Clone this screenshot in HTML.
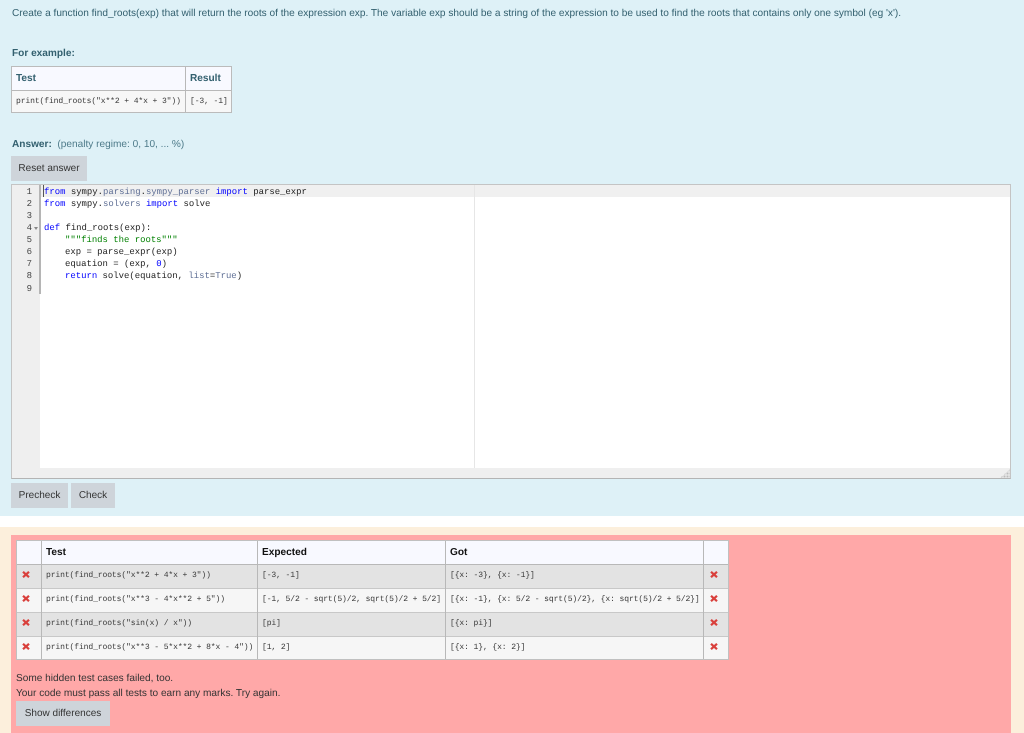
<!DOCTYPE html>
<html><head><meta charset="utf-8"><style>
html,body{margin:0;padding:0}
body{width:1024px;height:733px;position:relative;overflow:hidden;background:#fff;font-family:"Liberation Sans",sans-serif;font-size:10.1px;color:#2f2f2f;text-rendering:geometricPrecision;filter:blur(.3px)}
div{position:absolute;box-sizing:border-box}
.t{white-space:pre;line-height:14px}
.m{font-family:"Liberation Mono",monospace;white-space:pre;line-height:12px}
.b{font-weight:bold}
.btn{background:#ced4da;color:#333;text-align:center;line-height:26px;height:25px;font-size:10px}
.k{color:#00f}.g{color:#008000}.c{color:#5f6f95}
.ln{left:12px;width:20px;text-align:right;color:#444;font-family:"Liberation Mono",monospace;font-size:9px;line-height:12px}
svg.x{position:absolute;width:8px;height:7px}
.line{background:#b8b8b8}
.tm{font-size:8.06px;letter-spacing:-.12px;color:#3a3a3a;line-height:12px}
</style></head><body>
<div style="left:0;top:0;width:1024px;height:516px;background:#def1f7"></div>
<div style="left:0;top:527px;width:1024px;height:206px;background:#fcefdc"></div>
<div style="left:11px;top:535px;width:1000px;height:198px;background:#ffa8a8"></div>

<div class="t" style="left:12px;top:7px;color:#33606f">Create a function find_roots(exp) that will return the roots of the expression exp. The variable exp should be a string of the expression to be used to find the roots that contains only one symbol (eg 'x').</div>
<div class="t b" style="left:12px;top:47px;color:#33606f">For example:</div>

<div style="left:11px;top:66px;width:221px;height:47px;border:1px solid #bbb;background:#f7f7f7"></div>
<div style="left:12px;top:67px;width:219px;height:23px;background:#f8f9ff"></div>
<div class="line" style="left:12px;top:90px;width:219px;height:1px"></div>
<div class="line" style="left:185px;top:67px;width:1px;height:45px"></div>
<div class="t b" style="left:16px;top:72px;color:#33606f">Test</div>
<div class="t b" style="left:190px;top:72px;color:#33606f">Result</div>
<div class="m tm" style="left:16px;top:96px">print(find_roots("x**2 + 4*x + 3"))</div>
<div class="m tm" style="left:190px;top:96px">[-3, -1]</div>

<div class="t" style="left:12px;top:138px;color:#4d7a89"><span class="b" style="color:#33606f">Answer:</span>  (penalty regime: 0, 10, ... %)</div>
<div class="btn" style="left:11px;top:156px;width:76px">Reset answer</div>

<div style="left:11px;top:184px;width:1000px;height:295px;background:#fff;border:1px solid #c4c4c4;border-bottom-color:#b4b4b4"></div>
<div style="left:12px;top:185px;width:28px;height:293px;background:#efefef"></div>
<div style="left:12px;top:468px;width:998px;height:10px;background:#efefef"></div>
<div style="left:40px;top:185px;width:970px;height:12px;background:#f0f0f0"></div>
<div style="left:474px;top:185px;width:1px;height:283px;background:#e6e6e6"></div>
<div style="left:39px;top:185px;width:2px;height:109px;background:#b5b5b5"></div>
<div style="left:43px;top:185px;width:1px;height:12px;background:#555"></div>

<div class="ln" style="top:186px">1</div>
<div class="ln" style="top:198px">2</div>
<div class="ln" style="top:210px">3</div>
<div class="ln" style="top:222px">4</div>
<div class="ln" style="top:234px">5</div>
<div class="ln" style="top:246px">6</div>
<div class="ln" style="top:258px">7</div>
<div class="ln" style="top:270px">8</div>
<div class="ln" style="top:283px">9</div>
<div style="left:34px;top:227px;width:0;height:0;border-left:2px solid transparent;border-right:2px solid transparent;border-top:3px solid #888"></div>

<div class="m" style="left:44px;top:186px;font-size:8.95px;color:#222"><span class="k">from</span> sympy.<span class="c">parsing</span>.<span class="c">sympy_parser</span> <span class="k">import</span> parse_expr</div>
<div class="m" style="left:44px;top:198px;font-size:8.95px;color:#222"><span class="k">from</span> sympy.<span class="c">solvers</span> <span class="k">import</span> solve</div>
<div class="m" style="left:44px;top:222px;font-size:8.95px;color:#222"><span class="k">def</span> find_roots(exp):</div>
<div class="m g" style="left:65px;top:234px;font-size:8.95px">"""finds the roots"""</div>
<div class="m" style="left:65px;top:246px;font-size:8.95px;color:#222">exp = parse_expr(exp)</div>
<div class="m" style="left:65px;top:258px;font-size:8.95px;color:#222">equation = (exp, <span class="k">0</span>)</div>
<div class="m" style="left:65px;top:270px;font-size:8.95px;color:#222"><span class="k">return</span> solve(equation, <span class="c">list</span>=<span class="c">True</span>)</div>

<div style="left:1000px;top:469px;width:10px;height:9px;background:radial-gradient(#bbb 50%,transparent 55%) 0 0/3px 3px;clip-path:polygon(100% 0,100% 100%,0 100%)"></div>

<div class="btn" style="left:11px;top:483px;width:57px">Precheck</div>
<div class="btn" style="left:71px;top:483px;width:44px">Check</div>

<div style="left:16px;top:540px;width:713px;height:120px;background:#f6f6f6;border:1px solid #c0c0c0"></div>
<div style="left:17px;top:541px;width:711px;height:23px;background:#f8f9ff"></div>
<div style="left:17px;top:565px;width:711px;height:23px;background:#e3e3e3"></div>
<div style="left:17px;top:613px;width:711px;height:23px;background:#e3e3e3"></div>
<div class="line" style="left:17px;top:564px;width:711px;height:1px"></div>
<div class="line" style="left:17px;top:588px;width:711px;height:1px;background:#c8c8c8"></div>
<div class="line" style="left:17px;top:612px;width:711px;height:1px;background:#c8c8c8"></div>
<div class="line" style="left:17px;top:636px;width:711px;height:1px;background:#c8c8c8"></div>
<div class="line" style="left:41px;top:541px;width:1px;height:118px"></div>
<div class="line" style="left:257px;top:541px;width:1px;height:118px"></div>
<div class="line" style="left:445px;top:541px;width:1px;height:118px"></div>
<div class="line" style="left:703px;top:541px;width:1px;height:118px"></div>

<div class="t b" style="left:46px;top:546px;color:#111">Test</div>
<div class="t b" style="left:262px;top:546px;color:#111">Expected</div>
<div class="t b" style="left:450px;top:546px;color:#111">Got</div>

<svg class="x" style="left:22px;top:571px" viewBox="0 0 8 7"><path d="M1 .8L7 6.2M7 .8L1 6.2" stroke="#d9403c" stroke-width="2.2" fill="none"/></svg>
<svg class="x" style="left:22px;top:595px" viewBox="0 0 8 7"><path d="M1 .8L7 6.2M7 .8L1 6.2" stroke="#d9403c" stroke-width="2.2" fill="none"/></svg>
<svg class="x" style="left:22px;top:619px" viewBox="0 0 8 7"><path d="M1 .8L7 6.2M7 .8L1 6.2" stroke="#d9403c" stroke-width="2.2" fill="none"/></svg>
<svg class="x" style="left:22px;top:643px" viewBox="0 0 8 7"><path d="M1 .8L7 6.2M7 .8L1 6.2" stroke="#d9403c" stroke-width="2.2" fill="none"/></svg>
<svg class="x" style="left:710px;top:571px" viewBox="0 0 8 7"><path d="M1 .8L7 6.2M7 .8L1 6.2" stroke="#d9403c" stroke-width="2.2" fill="none"/></svg>
<svg class="x" style="left:710px;top:595px" viewBox="0 0 8 7"><path d="M1 .8L7 6.2M7 .8L1 6.2" stroke="#d9403c" stroke-width="2.2" fill="none"/></svg>
<svg class="x" style="left:710px;top:619px" viewBox="0 0 8 7"><path d="M1 .8L7 6.2M7 .8L1 6.2" stroke="#d9403c" stroke-width="2.2" fill="none"/></svg>
<svg class="x" style="left:710px;top:643px" viewBox="0 0 8 7"><path d="M1 .8L7 6.2M7 .8L1 6.2" stroke="#d9403c" stroke-width="2.2" fill="none"/></svg>

<div class="m tm" style="left:46px;top:570px">print(find_roots("x**2 + 4*x + 3"))</div>
<div class="m tm" style="left:262px;top:570px">[-3, -1]</div>
<div class="m tm" style="left:450px;top:570px">[{x: -3}, {x: -1}]</div>
<div class="m tm" style="left:46px;top:594px">print(find_roots("x**3 - 4*x**2 + 5"))</div>
<div class="m tm" style="left:262px;top:594px">[-1, 5/2 - sqrt(5)/2, sqrt(5)/2 + 5/2]</div>
<div class="m tm" style="left:450px;top:594px">[{x: -1}, {x: 5/2 - sqrt(5)/2}, {x: sqrt(5)/2 + 5/2}]</div>
<div class="m tm" style="left:46px;top:618px">print(find_roots("sin(x) / x"))</div>
<div class="m tm" style="left:262px;top:618px">[pi]</div>
<div class="m tm" style="left:450px;top:618px">[{x: pi}]</div>
<div class="m tm" style="left:46px;top:642px">print(find_roots("x**3 - 5*x**2 + 8*x - 4"))</div>
<div class="m tm" style="left:262px;top:642px">[1, 2]</div>
<div class="m tm" style="left:450px;top:642px">[{x: 1}, {x: 2}]</div>

<div class="t" style="left:16px;top:672px;color:#333">Some hidden test cases failed, too.</div>
<div class="t" style="left:16px;top:687px;color:#333">Your code must pass all tests to earn any marks. Try again.</div>
<div class="btn" style="left:16px;top:701px;width:94px">Show differences</div>
</body></html>
